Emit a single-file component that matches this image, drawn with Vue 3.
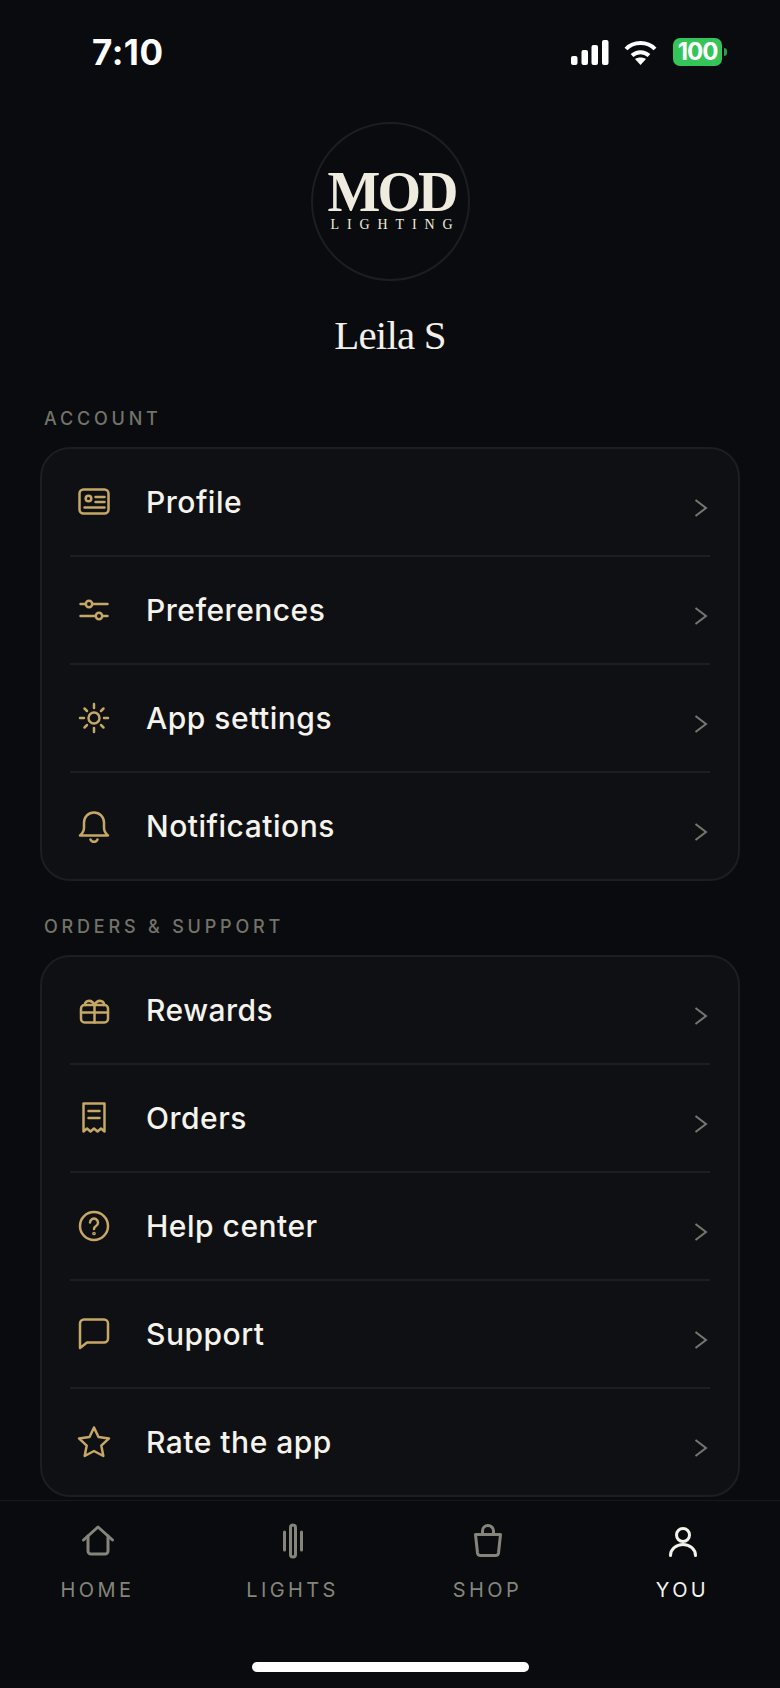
<template>
  <div class="phone">
    <div class="status">
      <span class="time">7:10</span>
      <div class="status-right">
        <svg class="signal" width="38" height="25" viewBox="0 0 38 25">
          <rect x="0" y="16" width="6.500" height="9" rx="2" />
          <rect x="10.500" y="10" width="6.500" height="15" rx="2" />
          <rect x="20.500" y="5" width="6.500" height="20" rx="2" />
          <rect x="31" y="0" width="6.500" height="25" rx="2" />
        </svg>
        <svg class="wifi" width="33" height="25" viewBox="0 0 33 25" fill="none" stroke="#fff" stroke-width="4">
          <path d="M2 9C9.500 1 23.500 1 31 9" />
          <path d="M8 15.500C13 11 20 11 25 15.500" />
          <path d="M16.500 25L11 19C14 17 19 17 22 19Z" fill="#fff" stroke="none" />
        </svg>
        <div class="battery"><span>100</span></div>
        <div class="battery-nub"></div>
      </div>
    </div>

    <div class="head">
      <div class="avatar">
        <div class="mod">MOD</div>
        <div class="lighting">LIGHTING</div>
      </div>
      <div class="name">Leila S</div>
    </div>

    <section v-for="group in groups" :key="group.title" class="group">
      <div class="group-title">{{ group.title }}</div>
      <div class="card">
        <div v-for="row in group.rows" :key="row.label" class="row">
          <svg class="row-icon" width="36" height="36" viewBox="0 0 36 36" fill="none" stroke="#c6a765" stroke-width="2.500" stroke-linecap="round" stroke-linejoin="round" v-html="row.icon"></svg>
          <span class="row-label">{{ row.label }}</span>
          <svg class="chevron" width="14" height="18" viewBox="0 0 14 18" fill="none" stroke="#77776f" stroke-width="2">
            <path d="M1.500 1L12 9L1.500 17" />
          </svg>
        </div>
      </div>
    </section>

    <nav class="tabs">
      <div v-for="tab in tabs" :key="tab.label" class="tab" :class="{ active: tab.active }">
        <svg width="36" height="36" viewBox="0 0 36 36" fill="none" stroke="currentColor" stroke-width="3" stroke-linecap="round" stroke-linejoin="round" v-html="tab.icon"></svg>
        <span>{{ tab.label }}</span>
      </div>
    </nav>
    <div class="home-bar"></div>
  </div>
</template>

<script setup>
const groups = [
  {
    title: 'ACCOUNT',
    rows: [
      {
        label: 'Profile',
        icon: '<rect x="3.500" y="5.500" width="29" height="24" rx="4"/><circle cx="12.500" cy="14.500" r="2.800"/><path d="M19.500 13h9M19.500 18h9M8.500 23.500h20"/>'
      },
      {
        label: 'Preferences',
        icon: '<path d="M4.500 12h27M4.500 24h27"/><circle cx="13" cy="12" r="3.200" fill="#0e1014"/><circle cx="23" cy="24" r="3.200" fill="#0e1014"/>'
      },
      {
        label: 'App settings',
        icon: '<circle cx="18" cy="18" r="5.500"/><path d="M18 4v4M18 28v4M4 18h4M28 18h4M8.500 8.500l2.500 2.500M25 25l2.500 2.500M8.500 27.500l2.500-2.500M25 11l2.500-2.500"/>'
      },
      {
        label: 'Notifications',
        icon: '<path d="M4 27.500c2.500-2 4-4 4-8v-5a10 10 0 0 1 20 0v5c0 4 1.500 6 4 8Z"/><path d="M14.500 31.500a3.800 3.800 0 0 0 7 0"/>'
      }
    ]
  },
  {
    title: 'ORDERS & SUPPORT',
    rows: [
      {
        label: 'Rewards',
        icon: '<rect x="5" y="13" width="27" height="17.500" rx="3.500"/><path d="M5 20.500h27M18.500 13v17.500M18.500 13c-1.500-3-4-4.500-6.500-4s-3.500 2.500-2.500 4M18.500 13c1.500-3 4-4.500 6.500-4s3.500 2.500 2.500 4"/>'
      },
      {
        label: 'Orders',
        icon: '<path d="M7.500 3.500h21v28l-3.500-3-3.500 3-3.500-3-3.500 3-3.500-3-3.500 3Z"/><path d="M12.500 11h11M12.500 18h11"/>'
      },
      {
        label: 'Help center',
        icon: '<circle cx="18" cy="18" r="14"/><path d="M14 14.500a4 4 0 1 1 6 3.500c-1.300.8-2 1.500-2 3"/><circle cx="18" cy="25.500" r=".6" fill="#c6a765"/>'
      },
      {
        label: 'Support',
        icon: '<path d="M8 3.500h20a4 4 0 0 1 4 4v15a4 4 0 0 1-4 4H11l-7 5.500V7.500a4 4 0 0 1 4-4Z"/>'
      },
      {
        label: 'Rate the app',
        icon: '<path d="M18 3.500l4.500 9.500 10.500 1.400-7.700 7.200 2 10.400L18 27l-9.300 5 2-10.400L3 14.400 13.500 13Z"/>'
      }
    ]
  }
]

const tabs = [
  {
    label: 'HOME',
    icon: '<path d="M3.500 17L18 4l14.500 13"/><path d="M8 13v15a3 3 0 0 0 3 3h14a3 3 0 0 0 3-3V13"/>'
  },
  {
    label: 'LIGHTS',
    icon: '<rect x="15.500" y="2" width="5" height="32" rx="2.500"/><path d="M9.500 9v18M26.500 9v18"/>'
  },
  {
    label: 'SHOP',
    icon: '<path d="M5.500 11.500h25l-2 18.500a3 3 0 0 1-3 2.500h-15a3 3 0 0 1-3-2.500Z"/><path d="M12.500 11.500V8a5.500 5.500 0 0 1 11 0v3.500"/>'
  },
  {
    label: 'YOU',
    active: true,
    icon: '<circle cx="18" cy="12" r="6.500"/><path d="M5.500 32.500a12.500 11 0 0 1 25 0"/>'
  }
]
</script>

<style>
html, body {
  margin: 0;
  background: #0a0b0e;
}
</style>

<style scoped>
.phone {
  width: 780px;
  height: 1688px;
  overflow: hidden;
  background: #0a0b0e;
  color: #f5f3ec;
  font-family: Inter, "Noto Sans", sans-serif;
  display: flex;
  flex-direction: column;
}

.status {
  height: 122px;
  box-sizing: border-box;
  padding: 32px 53px 0 92px;
  display: flex;
  justify-content: space-between;
  align-items: flex-start;
}
.time {
  font-weight: 700;
  font-size: 35px;
  line-height: 40px;
  letter-spacing: 0.5px;
  color: #fff;
}
.status-right {
  display: flex;
  align-items: center;
  height: 28px;
  margin-top: 6px;
}
.signal {
  fill: #fff;
  margin-right: 15px;
}
.wifi {
  margin-right: 16px;
}
.battery {
  width: 49px;
  height: 28px;
  border-radius: 7px;
  background: #35c45a;
  color: #fff;
  font-weight: 700;
  font-size: 24px;
  line-height: 28px;
  text-align: center;
  letter-spacing: -1px;
}
.battery-nub {
  width: 3px;
  height: 8px;
  margin-left: 2px;
  border-radius: 0 3px 3px 0;
  background: #2f9c4b;
}

.head {
  display: flex;
  flex-direction: column;
  align-items: center;
}
.avatar {
  width: 159px;
  height: 159px;
  box-sizing: border-box;
  border: 2px solid #1c1e22;
  border-radius: 50%;
  display: flex;
  flex-direction: column;
  align-items: center;
  padding-top: 44px;
  font-family: "Liberation Serif", serif;
  color: #efebdf;
}
.mod {
  font-weight: 700;
  font-size: 56px;
  line-height: 48px;
  letter-spacing: -3px;
  margin-left: 3px;
}
.lighting {
  font-size: 14px;
  line-height: 12px;
  letter-spacing: 7.900px;
  margin-top: 3px;
  margin-right: -11px;
}
.name {
  margin-top: 29px;
  font-family: "Liberation Serif", serif;
  font-size: 41px;
  line-height: 50px;
  letter-spacing: -0.8px;
  color: #f2f0e8;
}

.group-title {
  margin: 0 0 18px 44px;
  height: 20px;
  font-size: 18px;
  line-height: 20px;
  font-weight: 500;
  letter-spacing: 3.800px;
  color: #74736a;
}
.group:first-of-type {
  margin-top: 49px;
}
.group + .group {
  margin-top: 36px;
}
.card {
  margin: 0 40px;
  box-sizing: border-box;
  border: 2px solid #1c1e22;
  border-radius: 30px;
  background: #0e1014;
  padding: 0 28px;
}
.row {
  height: 108px;
  box-sizing: border-box;
  display: flex;
  align-items: center;
  border-bottom: 2px solid #1c1e22;
}
.row:last-child {
  height: 106px;
  border-bottom: 0;
}
.row-icon {
  margin-left: 6px;
  margin-right: 34px;
  flex: none;
}
.row-label {
  flex: 1;
  font-size: 30px;
  font-weight: 500;
  letter-spacing: 0.5px;
  color: #f5f3ec;
}
.chevron {
  margin-top: 12px;
  margin-right: 2px;
}

.tabs {
  margin-top: 3px;
  border-top: 1px solid #17191c;
  display: grid;
  grid-template-columns: repeat(4, 195px);
  padding-top: 22px;
}
.tab {
  display: flex;
  flex-direction: column;
  align-items: center;
  gap: 18px;
  color: #85857c;
  font-size: 20px;
  line-height: 26px;
  letter-spacing: 3.400px;
}
.tab.active {
  color: #f5f3ec;
}
.home-bar {
  width: 277px;
  height: 10px;
  border-radius: 5px;
  background: #fff;
  margin: 59px auto 0;
}
</style>
